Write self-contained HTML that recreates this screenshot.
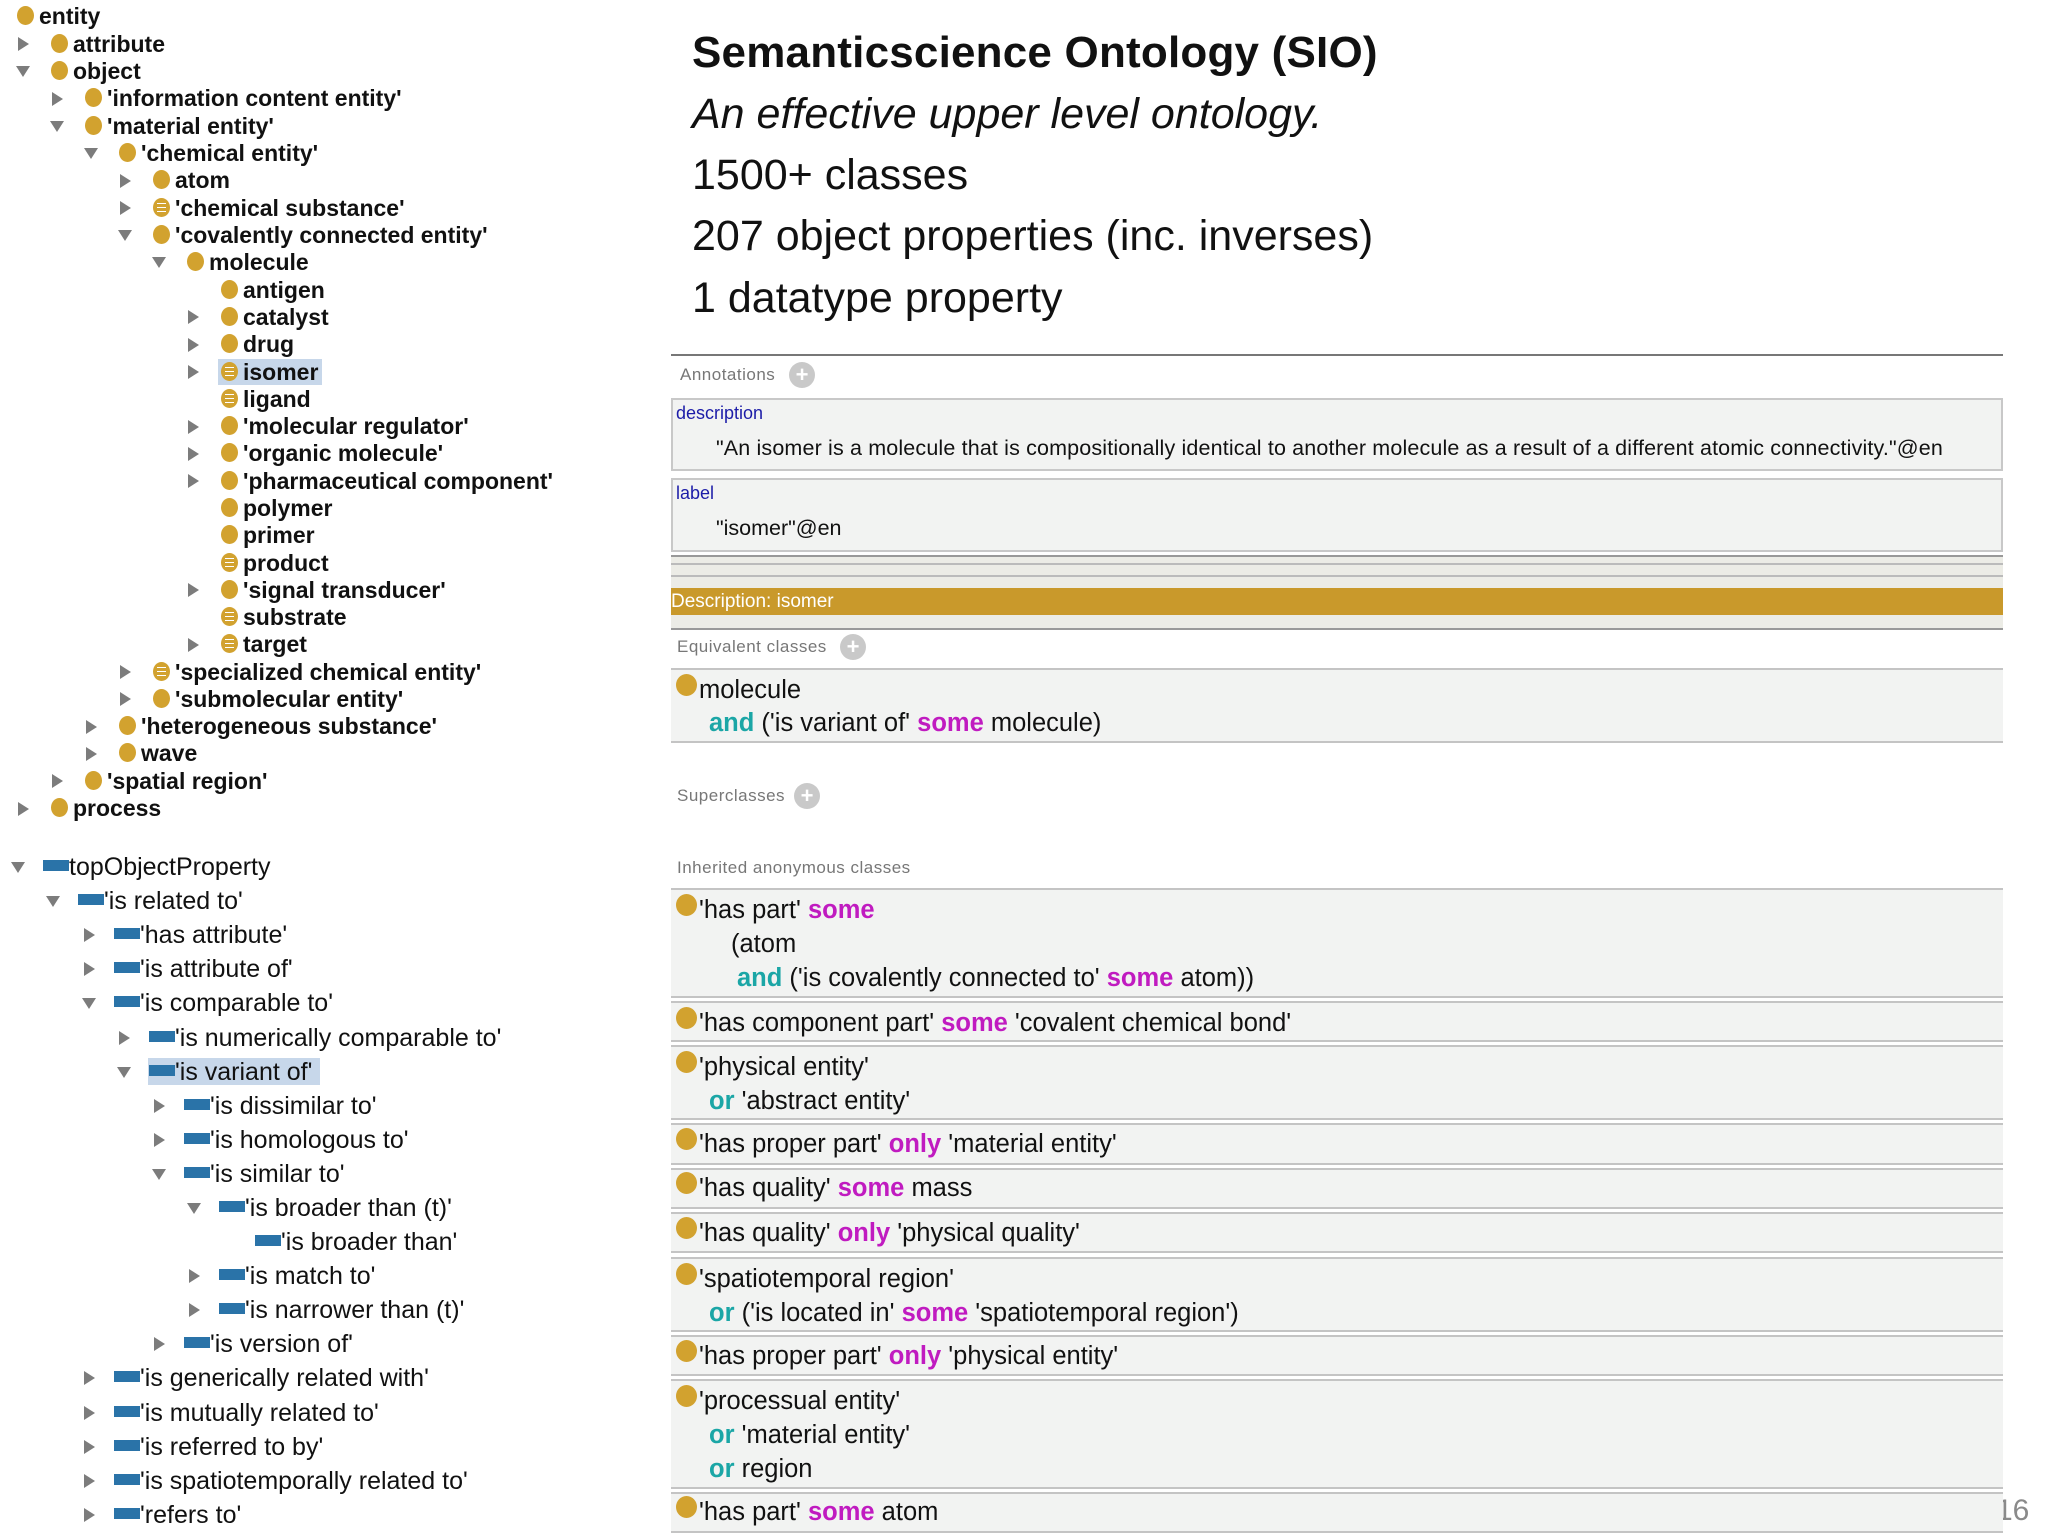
<!DOCTYPE html>
<html><head><meta charset="utf-8"><style>
body{margin:0;width:2048px;height:1536px;background:#fff;position:relative;overflow:hidden;font-family:"Liberation Sans",sans-serif}
.a{position:absolute}
.t{position:absolute;height:27px;line-height:27px;white-space:nowrap;font-weight:bold;font-size:23px;letter-spacing:0px;color:#111}
.t i,.p i{display:inline-block;vertical-align:middle}
.c{width:17px;height:19px;border-radius:50%;background:#d2a22f;margin-right:5px;position:relative;top:-2px}
.e{background:#d2a22f linear-gradient(#d2a22f 5px,#fff 5px,#fff 6px,#d2a22f 6px,#d2a22f 9px,#fff 9px,#fff 10px,#d2a22f 10px,#d2a22f 13px,#fff 13px,#fff 14px,#d2a22f 14px) no-repeat;background-size:9px 19px;background-position:4px 0}
.r{position:absolute;width:0;height:0;border-left:11px solid #7c7c7c;border-top:7px solid transparent;border-bottom:7px solid transparent}
.d{position:absolute;width:0;height:0;border-top:11px solid #7c7c7c;border-left:7px solid transparent;border-right:7px solid transparent}
.p{position:absolute;height:34px;line-height:34px;white-space:nowrap;font-size:25px;color:#111}
.b{width:26px;height:11px;background:#2a73a8;position:relative;top:-3px}
.h{position:absolute;font-size:43px;color:#111;white-space:nowrap;left:692px}
.lbl{position:absolute;font-size:17px;color:#777;letter-spacing:0.5px;white-space:nowrap}
.plus{position:absolute;width:26px;height:26px;border-radius:50%;background:#c9c9c9;color:#fff;font-weight:bold;font-size:22px;line-height:26px;text-align:center}
.box{position:absolute;left:671px;width:1332px;background:#f2f3f2;border-top:2px solid #c4c4c4;border-bottom:2px solid #c4c4c4;box-sizing:border-box}
.x{position:absolute;font-size:25.5px;color:#111;white-space:nowrap;left:701px}
.x .o{display:inline-block;width:21px;height:22px;border-radius:50%;background:#d2a22f;vertical-align:-2px;margin-left:-25px;margin-right:2px;position:relative;top:-4px}
.k{color:#1ba6a6;font-weight:bold}
.m{color:#c01bc0;font-weight:bold}
</style></head><body>
<div class="a" style="left:1996px;top:1494px;font-size:30px;color:#8a8a8a">16</div>
<!-- highlights -->
<div class="a" style="left:218px;top:359px;width:104px;height:26px;background:#c7d7ea"></div>
<div class="a" style="left:148px;top:1058px;width:172px;height:27px;background:#c7d7ea"></div>

<!-- upper tree -->
<div class="t" style="left:17px;top:3px"><i class="c"></i>entity</div>
<div class="r" style="left:18px;top:37px"></div><div class="t" style="left:51px;top:31px"><i class="c"></i>attribute</div>
<div class="d" style="left:16px;top:66px"></div><div class="t" style="left:51px;top:58px"><i class="c"></i>object</div>
<div class="r" style="left:52px;top:92px"></div><div class="t" style="left:85px;top:85px"><i class="c"></i>'information content entity'</div>
<div class="d" style="left:50px;top:121px"></div><div class="t" style="left:85px;top:113px"><i class="c"></i>'material entity'</div>
<div class="d" style="left:84px;top:148px"></div><div class="t" style="left:119px;top:140px"><i class="c"></i>'chemical entity'</div>
<div class="r" style="left:120px;top:174px"></div><div class="t" style="left:153px;top:167px"><i class="c"></i>atom</div>
<div class="r" style="left:120px;top:201px"></div><div class="t" style="left:153px;top:195px"><i class="c e"></i>'chemical substance'</div>
<div class="d" style="left:118px;top:230px"></div><div class="t" style="left:153px;top:222px"><i class="c"></i>'covalently connected entity'</div>
<div class="d" style="left:152px;top:257px"></div><div class="t" style="left:187px;top:249px"><i class="c"></i>molecule</div>
<div class="t" style="left:221px;top:277px"><i class="c"></i>antigen</div>
<div class="r" style="left:188px;top:310px"></div><div class="t" style="left:221px;top:304px"><i class="c"></i>catalyst</div>
<div class="r" style="left:188px;top:338px"></div><div class="t" style="left:221px;top:331px"><i class="c"></i>drug</div>
<div class="r" style="left:188px;top:365px"></div><div class="t" style="left:221px;top:359px"><i class="c e"></i>isomer</div>
<div class="t" style="left:221px;top:386px"><i class="c e"></i>ligand</div>
<div class="r" style="left:188px;top:420px"></div><div class="t" style="left:221px;top:413px"><i class="c"></i>'molecular regulator'</div>
<div class="r" style="left:188px;top:447px"></div><div class="t" style="left:221px;top:440px"><i class="c"></i>'organic molecule'</div>
<div class="r" style="left:188px;top:474px"></div><div class="t" style="left:221px;top:468px"><i class="c"></i>'pharmaceutical component'</div>
<div class="t" style="left:221px;top:495px"><i class="c"></i>polymer</div>
<div class="t" style="left:221px;top:522px"><i class="c"></i>primer</div>
<div class="t" style="left:221px;top:550px"><i class="c e"></i>product</div>
<div class="r" style="left:188px;top:583px"></div><div class="t" style="left:221px;top:577px"><i class="c"></i>'signal transducer'</div>
<div class="t" style="left:221px;top:604px"><i class="c e"></i>substrate</div>
<div class="r" style="left:188px;top:638px"></div><div class="t" style="left:221px;top:631px"><i class="c e"></i>target</div>
<div class="r" style="left:120px;top:665px"></div><div class="t" style="left:153px;top:659px"><i class="c e"></i>'specialized chemical entity'</div>
<div class="r" style="left:120px;top:692px"></div><div class="t" style="left:153px;top:686px"><i class="c"></i>'submolecular entity'</div>
<div class="r" style="left:86px;top:720px"></div><div class="t" style="left:119px;top:713px"><i class="c"></i>'heterogeneous substance'</div>
<div class="r" style="left:86px;top:747px"></div><div class="t" style="left:119px;top:740px"><i class="c"></i>wave</div>
<div class="r" style="left:52px;top:774px"></div><div class="t" style="left:85px;top:768px"><i class="c"></i>'spatial region'</div>
<div class="r" style="left:18px;top:802px"></div><div class="t" style="left:51px;top:795px"><i class="c"></i>process</div>

<!-- lower tree -->
<div class="d" style="left:11px;top:862px"></div><div class="p" style="left:43px;top:850px"><i class="b"></i>topObjectProperty</div>
<div class="d" style="left:46px;top:896px"></div><div class="p" style="left:78px;top:884px"><i class="b"></i>'is related to'</div>
<div class="r" style="left:84px;top:928px"></div><div class="p" style="left:114px;top:918px"><i class="b"></i>'has attribute'</div>
<div class="r" style="left:84px;top:962px"></div><div class="p" style="left:114px;top:952px"><i class="b"></i>'is attribute of'</div>
<div class="d" style="left:82px;top:998px"></div><div class="p" style="left:114px;top:986px"><i class="b"></i>'is comparable to'</div>
<div class="r" style="left:119px;top:1031px"></div><div class="p" style="left:149px;top:1021px"><i class="b"></i>'is numerically comparable to'</div>
<div class="d" style="left:117px;top:1067px"></div><div class="p" style="left:149px;top:1055px"><i class="b"></i>'is variant of'</div>
<div class="r" style="left:154px;top:1099px"></div><div class="p" style="left:184px;top:1089px"><i class="b"></i>'is dissimilar to'</div>
<div class="r" style="left:154px;top:1133px"></div><div class="p" style="left:184px;top:1123px"><i class="b"></i>'is homologous to'</div>
<div class="d" style="left:152px;top:1169px"></div><div class="p" style="left:184px;top:1157px"><i class="b"></i>'is similar to'</div>
<div class="d" style="left:187px;top:1203px"></div><div class="p" style="left:219px;top:1191px"><i class="b"></i>'is broader than (t)'</div>
<div class="p" style="left:255px;top:1225px"><i class="b"></i>'is broader than'</div>
<div class="r" style="left:189px;top:1269px"></div><div class="p" style="left:219px;top:1259px"><i class="b"></i>'is match to'</div>
<div class="r" style="left:189px;top:1303px"></div><div class="p" style="left:219px;top:1293px"><i class="b"></i>'is narrower than (t)'</div>
<div class="r" style="left:154px;top:1337px"></div><div class="p" style="left:184px;top:1327px"><i class="b"></i>'is version of'</div>
<div class="r" style="left:84px;top:1371px"></div><div class="p" style="left:114px;top:1361px"><i class="b"></i>'is generically related with'</div>
<div class="r" style="left:84px;top:1406px"></div><div class="p" style="left:114px;top:1396px"><i class="b"></i>'is mutually related to'</div>
<div class="r" style="left:84px;top:1440px"></div><div class="p" style="left:114px;top:1430px"><i class="b"></i>'is referred to by'</div>
<div class="r" style="left:84px;top:1474px"></div><div class="p" style="left:114px;top:1464px"><i class="b"></i>'is spatiotemporally related to'</div>
<div class="r" style="left:84px;top:1508px"></div><div class="p" style="left:114px;top:1498px"><i class="b"></i>'refers to'</div>

<!-- headings -->
<div class="h" style="top:28px;font-weight:bold;font-size:44px;letter-spacing:0.2px">Semanticscience Ontology (SIO)</div>
<div class="h" style="top:90px;font-style:italic">An effective upper level ontology.</div>
<div class="h" style="top:151px">1500+ classes</div>
<div class="h" style="top:212px">207 object properties (inc. inverses)</div>
<div class="h" style="top:274px">1 datatype property</div>

<!-- panel -->
<div class="a" style="left:671px;top:354px;width:1332px;height:2px;background:#777"></div>
<div class="lbl" style="left:680px;top:365px">Annotations</div><div class="plus" style="left:789px;top:362px">+</div>
<div class="box" style="top:398px;height:73px;border:2px solid #c8c8c8"></div>
<div class="a" style="left:676px;top:403px;font-size:18px;color:#1c1ca8">description</div>
<div class="a" style="left:716px;top:436px;font-size:21.5px;color:#111;white-space:nowrap;letter-spacing:0.15px">"An isomer is a molecule that is compositionally identical to another molecule as a result of a different atomic connectivity."@en</div>
<div class="box" style="top:478px;height:74px;border:2px solid #c8c8c8"></div>
<div class="a" style="left:676px;top:483px;font-size:18px;color:#1c1ca8">label</div>
<div class="a" style="left:716px;top:516px;font-size:21.5px;color:#111">"isomer"@en</div>
<div class="a" style="left:671px;top:555px;width:1332px;height:33px;background:#ecece6;border-top:2px solid #999;box-sizing:border-box"></div>
<div class="a" style="left:671px;top:563px;width:1332px;height:2px;background:#bbb"></div>
<div class="a" style="left:671px;top:575px;width:1332px;height:2px;background:#bbb"></div>
<div class="a" style="left:671px;top:588px;width:1332px;height:27px;background:#c9992b;color:#fff;font-size:19px;line-height:27px">Description: isomer</div>
<div class="a" style="left:671px;top:615px;width:1332px;height:13px;background:#ecece6;border-bottom:2px solid #999"></div>
<div class="lbl" style="left:677px;top:637px">Equivalent classes</div><div class="plus" style="left:840px;top:634px">+</div>
<div class="box" style="top:668px;height:75px"></div>
<div class="x" style="top:676px"><span class="o"></span>molecule</div>
<div class="x" style="top:709px;left:709px"><span class="k">and</span> ('is variant of' <span class="m">some</span> molecule)</div>
<div class="lbl" style="left:677px;top:786px">Superclasses</div><div class="plus" style="left:794px;top:783px">+</div>
<div class="lbl" style="left:677px;top:858px">Inherited anonymous classes</div>

<div class="box" style="top:888px;height:110px"></div>
<div class="x" style="top:896px"><span class="o"></span>'has part' <span class="m">some</span></div>
<div class="x" style="top:930px;left:731px">(atom</div>
<div class="x" style="top:964px;left:737px"><span class="k">and</span> ('is covalently connected to' <span class="m">some</span> atom))</div>
<div class="box" style="top:1001px;height:41px"></div>
<div class="x" style="top:1009px"><span class="o"></span>'has component part' <span class="m">some</span> 'covalent chemical bond'</div>
<div class="box" style="top:1045px;height:75px"></div>
<div class="x" style="top:1053px"><span class="o"></span>'physical entity'</div>
<div class="x" style="top:1087px;left:709px"><span class="k">or</span> 'abstract entity'</div>
<div class="box" style="top:1123px;height:42px"></div>
<div class="x" style="top:1130px"><span class="o"></span>'has proper part' <span class="m">only</span> 'material entity'</div>
<div class="box" style="top:1168px;height:41px"></div>
<div class="x" style="top:1174px"><span class="o"></span>'has quality' <span class="m">some</span> mass</div>
<div class="box" style="top:1212px;height:41px"></div>
<div class="x" style="top:1219px"><span class="o"></span>'has quality' <span class="m">only</span> 'physical quality'</div>
<div class="box" style="top:1257px;height:75px"></div>
<div class="x" style="top:1265px"><span class="o"></span>'spatiotemporal region'</div>
<div class="x" style="top:1299px;left:709px"><span class="k">or</span> ('is located in' <span class="m">some</span> 'spatiotemporal region')</div>
<div class="box" style="top:1335px;height:41px"></div>
<div class="x" style="top:1342px"><span class="o"></span>'has proper part' <span class="m">only</span> 'physical entity'</div>
<div class="box" style="top:1379px;height:110px"></div>
<div class="x" style="top:1387px"><span class="o"></span>'processual entity'</div>
<div class="x" style="top:1421px;left:709px"><span class="k">or</span> 'material entity'</div>
<div class="x" style="top:1455px;left:709px"><span class="k">or</span> region</div>
<div class="box" style="top:1492px;height:41px"></div>
<div class="x" style="top:1498px"><span class="o"></span>'has part' <span class="m">some</span> atom</div>
</body></html>
